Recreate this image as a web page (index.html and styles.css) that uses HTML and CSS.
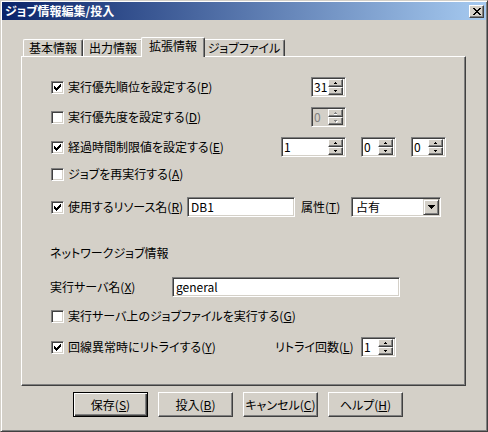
FILE: index.html
```html
<!DOCTYPE html>
<html lang="ja">
<head>
<meta charset="utf-8">
<title>ジョブ情報編集/投入</title>
<link rel="stylesheet" href="styles.css">
</head>
<body>
<div class="window">
  <div class="titlebar">
    <span class="title">ジョブ情報編集/投入</span>
    <span class="close"><svg width="8" height="7" viewBox="0 0 8 7" shape-rendering="crispEdges"><path d="M0 0h2v1H0zM6 0h2v1H6zM1 1h2v1H1zM5 1h2v1H5zM2 2h4v1H2zM3 3h2v1H3zM2 4h4v1H2zM1 5h2v1H1zM5 5h2v1H5zM0 6h2v1H0zM6 6h2v1H6z"/></svg></span>
  </div>
  <div class="client">
    <div class="tabs">
      <div class="tab w60">基本情報</div>
      <div class="tab w60">出力情報</div>
      <div class="tab w60 active">拡張情報</div>
      <div class="tab w82">ジョブファイル</div>
    </div>
    <div class="panel">
      <div class="row">
        <span class="opt lead260"><span class="cb"><svg width="7" height="7" viewBox="0 0 7 7" shape-rendering="crispEdges"><path d="M0 2h1v3H0zM1 3h1v3H1zM2 4h1v3H2zM3 3h1v3H3zM4 2h1v3H4zM5 1h1v3H5zM6 0h1v3H6z"/></svg></span>実行優先順位を設定する(<u>P</u>)</span>
        <span class="spin"><span class="val">31</span><span class="ud"><span class="ub"><svg width="3" height="2" viewBox="0 0 3 2" shape-rendering="crispEdges"><path d="M1 0h1v1h1v1H0V1h1z"/></svg></span><span class="ub"><svg width="3" height="2" viewBox="0 0 3 2" shape-rendering="crispEdges"><path d="M0 0h3v1H2v1H1V1H0z"/></svg></span></span></span>
      </div>
      <div class="row mt10">
        <span class="opt lead260"><span class="cb"></span>実行優先度を設定する(<u>D</u>)</span>
        <span class="spin disabled"><span class="val">0</span><span class="ud"><span class="ub"><svg width="4" height="3" viewBox="0 0 4 3" shape-rendering="crispEdges"><path class="hl" d="M1 1h1v1h1v1H0V2h1z"/><path class="gr" d="M1 0h1v1h1v1H0V1h1z"/></svg></span><span class="ub"><svg width="4" height="3" viewBox="0 0 4 3" shape-rendering="crispEdges"><path class="hl" d="M1 1h3v1H3v1H2V2H1z"/><path class="gr" d="M0 0h3v1H2v1H1V1H0z"/></svg></span></span></span>
      </div>
      <div class="row mt10">
        <span class="opt lead230"><span class="cb"><svg width="7" height="7" viewBox="0 0 7 7" shape-rendering="crispEdges"><path d="M0 2h1v3H0zM1 3h1v3H1zM2 4h1v3H2zM3 3h1v3H3zM4 2h1v3H4zM5 1h1v3H5zM6 0h1v3H6z"/></svg></span>経過時間制限値を設定する(<u>E</u>)</span>
        <span class="spin wide"><span class="val">1</span><span class="ud"><span class="ub"><svg width="3" height="2" viewBox="0 0 3 2" shape-rendering="crispEdges"><path d="M1 0h1v1h1v1H0V1h1z"/></svg></span><span class="ub"><svg width="3" height="2" viewBox="0 0 3 2" shape-rendering="crispEdges"><path d="M0 0h3v1H2v1H1V1H0z"/></svg></span></span></span>
        <span class="spin gap15"><span class="val">0</span><span class="ud"><span class="ub"><svg width="3" height="2" viewBox="0 0 3 2" shape-rendering="crispEdges"><path d="M1 0h1v1h1v1H0V1h1z"/></svg></span><span class="ub"><svg width="3" height="2" viewBox="0 0 3 2" shape-rendering="crispEdges"><path d="M0 0h3v1H2v1H1V1H0z"/></svg></span></span></span>
        <span class="spin gap15"><span class="val">0</span><span class="ud"><span class="ub"><svg width="3" height="2" viewBox="0 0 3 2" shape-rendering="crispEdges"><path d="M1 0h1v1h1v1H0V1h1z"/></svg></span><span class="ub"><svg width="3" height="2" viewBox="0 0 3 2" shape-rendering="crispEdges"><path d="M0 0h3v1H2v1H1V1H0z"/></svg></span></span></span>
      </div>
      <div class="row mt7">
        <span class="opt"><span class="cb"></span>ジョブを再実行する(<u>A</u>)</span>
      </div>
      <div class="row mt13">
        <span class="opt lead136"><span class="cb"><svg width="7" height="7" viewBox="0 0 7 7" shape-rendering="crispEdges"><path d="M0 2h1v3H0zM1 3h1v3H1zM2 4h1v3H2zM3 3h1v3H3zM4 2h1v3H4zM5 1h1v3H5zM6 0h1v3H6z"/></svg></span>使用するリソース名(<u>R</u>)</span>
        <span class="field w108">DB1</span>
        <span class="lbl w50">属性(<u>T</u>)</span>
        <span class="combo"><span class="val">占有</span><span class="drop"><svg width="7" height="4" viewBox="0 0 7 4" shape-rendering="crispEdges"><path d="M0 0h7v1H6v1H5v1H4v1H3V3H2V2H1V1H0z"/></svg></span></span>
      </div>
      <div class="row mt26">
        <span class="text">ネットワークジョブ情報</span>
      </div>
      <div class="row mt14">
        <span class="text lead121">実行サーバ名(<u>X</u>)</span>
        <span class="field w228">general</span>
      </div>
      <div class="row mt9">
        <span class="opt"><span class="cb"></span>実行サーバ上のジョブファイルを実行する(<u>G</u>)</span>
      </div>
      <div class="row mt11">
        <span class="opt lead218"><span class="cb"><svg width="7" height="7" viewBox="0 0 7 7" shape-rendering="crispEdges"><path d="M0 2h1v3H0zM1 3h1v3H1zM2 4h1v3H2zM3 3h1v3H3zM4 2h1v3H4zM5 1h1v3H5zM6 0h1v3H6z"/></svg></span>回線異常時にリトライする(<u>Y</u>)</span>
        <span class="lbl w92">リトライ回数(<u>L</u>)</span>
        <span class="spin"><span class="val">1</span><span class="ud"><span class="ub"><svg width="3" height="2" viewBox="0 0 3 2" shape-rendering="crispEdges"><path d="M1 0h1v1h1v1H0V1h1z"/></svg></span><span class="ub"><svg width="3" height="2" viewBox="0 0 3 2" shape-rendering="crispEdges"><path d="M0 0h3v1H2v1H1V1H0z"/></svg></span></span></span>
      </div>
    </div>
    <div class="buttons">
      <span class="btn default">保存(<u>S</u>)</span>
      <span class="btn">投入(<u>B</u>)</span>
      <span class="btn">キャンセル(<u>C</u>)</span>
      <span class="btn">ヘルプ(<u>H</u>)</span>
    </div>
  </div>
</div>
</body>
</html>
```
FILE: styles.css
```css
* { box-sizing: border-box; }
html, body { margin: 0; padding: 0; }
body {
  width: 488px;
  height: 432px;
  overflow: hidden;
  background: #D4D0C8;
  font-family: "Noto Sans CJK JP", "Noto Sans", sans-serif;
  font-size: 12px;
  line-height: 14px;
  color: #000;
  font-feature-settings: "palt";
}
u { text-decoration: underline; text-underline-offset: 1px; }
svg { display: block; }

.window {
  width: 488px;
  height: 432px;
  border: 1px solid;
  border-color: #D4D0C8 #404040 #404040 #D4D0C8;
  padding: 1px;
  box-shadow: inset 1px 1px #fff, inset -1px -1px #808080;
  background: #D4D0C8;
  display: flex;
  flex-direction: column;
}

.titlebar {
  height: 18px;
  display: flex;
  align-items: center;
  justify-content: space-between;
  background: linear-gradient(to right, #0A246A, #A6CAF0);
  padding: 0 2px 0 3px;
}
.title { color: #fff; font-weight: bold; }
.close {
  width: 15px;
  height: 13px;
  background: #D4D0C8;
  border: 1px solid;
  border-color: #fff #404040 #404040 #fff;
  box-shadow: inset -1px -1px #808080;
  display: flex;
  align-items: center;
  justify-content: center;
}

.client {
  flex: 1;
  padding: 17px 0 0 19px;
}

.tabs {
  display: flex;
  align-items: flex-end;
  height: 19px;
  padding-left: 2px;
}
.tab {
  height: 17px;
  background: #D4D0C8;
  border-top: 1px solid #fff;
  border-left: 1px solid #fff;
  border-right: 1px solid #404040;
  box-shadow: inset -1px 0 #808080;
  border-radius: 2px 2px 0 0;
  display: flex;
  align-items: center;
  justify-content: center;
  white-space: nowrap;
}
.tab.w60 { width: 60px; }
.tab.w82 { width: 82px; }
.tab.active {
  height: 20px;
  width: 64px;
  margin: 0 -2px -1px;
  padding-bottom: 4px;
  z-index: 1;
}

.panel {
  width: 445px;
  height: 330px;
  border: 1px solid;
  border-color: #fff #404040 #404040 #fff;
  box-shadow: inset -1px -1px #808080;
  padding: 20px 0 0 29px;
  display: flex;
  flex-direction: column;
}

.row {
  display: flex;
  align-items: center;
  height: 20px;
  flex: none;
  white-space: nowrap;
}
.mt7 { margin-top: 7px; }
.mt9 { margin-top: 9px; }
.mt10 { margin-top: 10px; }
.mt11 { margin-top: 11px; }
.mt13 { margin-top: 13px; }
.mt14 { margin-top: 14px; }
.mt26 { margin-top: 26px; }

.opt { display: flex; align-items: center; flex: none; }
.lead260 { width: 260px; }
.lead230 { width: 230px; }
.lead136 { width: 136px; }
.lead121 { width: 122px; }
.lead218 { width: 218px; }
.text { margin-left: -1px; flex: none; }
.lbl { flex: none; padding-left: 6px; }
.w50 { width: 56px; }
.w92 { width: 92px; }

.cb {
  width: 13px;
  height: 13px;
  margin-right: 4px;
  flex: none;
  background: #fff;
  border: 1px solid;
  border-color: #808080 #fff #fff #808080;
  box-shadow: inset 1px 1px #404040, inset -1px -1px #D4D0C8;
  display: flex;
  align-items: center;
  justify-content: center;
}

.field, .spin, .combo {
  height: 20px;
  flex: none;
  background: #fff;
  border: 1px solid;
  border-color: #808080 #fff #fff #808080;
  box-shadow: inset 1px 1px #404040, inset -1px -1px #D4D0C8;
  padding: 1px;
  display: flex;
  align-items: center;
}
.field { padding-left: 3px; }
.w108 { width: 108px; }
.w228 { width: 228px; }

.spin { width: 35px; align-items: stretch; }
.spin.wide { width: 65px; }
.gap15 { margin-left: 15px; }
.spin .val, .combo .val {
  flex: 1;
  display: flex;
  align-items: center;
  padding-left: 1px;
}
.ud {
  width: 15px;
  display: flex;
  flex-direction: column;
  margin-right: 1px;
}
.ub {
  height: 8px;
  background: #D4D0C8;
  border: 1px solid;
  border-color: #fff #404040 #404040 #fff;
  box-shadow: inset -1px -1px #808080;
  display: flex;
  align-items: center;
  justify-content: center;
}
.spin.disabled { background: #D4D0C8; }
.spin.disabled .val { color: #808080; }
.hl { fill: #fff; }
.gr { fill: #808080; }

.combo { width: 90px; align-items: stretch; }
.combo .val { padding-left: 3px; }
.drop {
  width: 16px;
  background: #D4D0C8;
  border: 1px solid;
  border-color: #D4D0C8 #404040 #404040 #D4D0C8;
  box-shadow: inset 1px 1px #fff, inset -1px -1px #808080;
  display: flex;
  align-items: center;
  justify-content: center;
}

.buttons {
  display: flex;
  gap: 10px;
  margin-top: 6px;
  padding-left: 52px;
}
.btn {
  width: 75px;
  height: 25px;
  background: #D4D0C8;
  border: 1px solid;
  border-color: #fff #404040 #404040 #fff;
  box-shadow: inset -1px -1px #808080;
  display: flex;
  align-items: center;
  justify-content: center;
  white-space: nowrap;
}
.btn.default {
  border-color: #000;
  box-shadow: inset 1px 1px #fff, inset -1px -1px #404040, inset -2px -2px #808080;
}
```
